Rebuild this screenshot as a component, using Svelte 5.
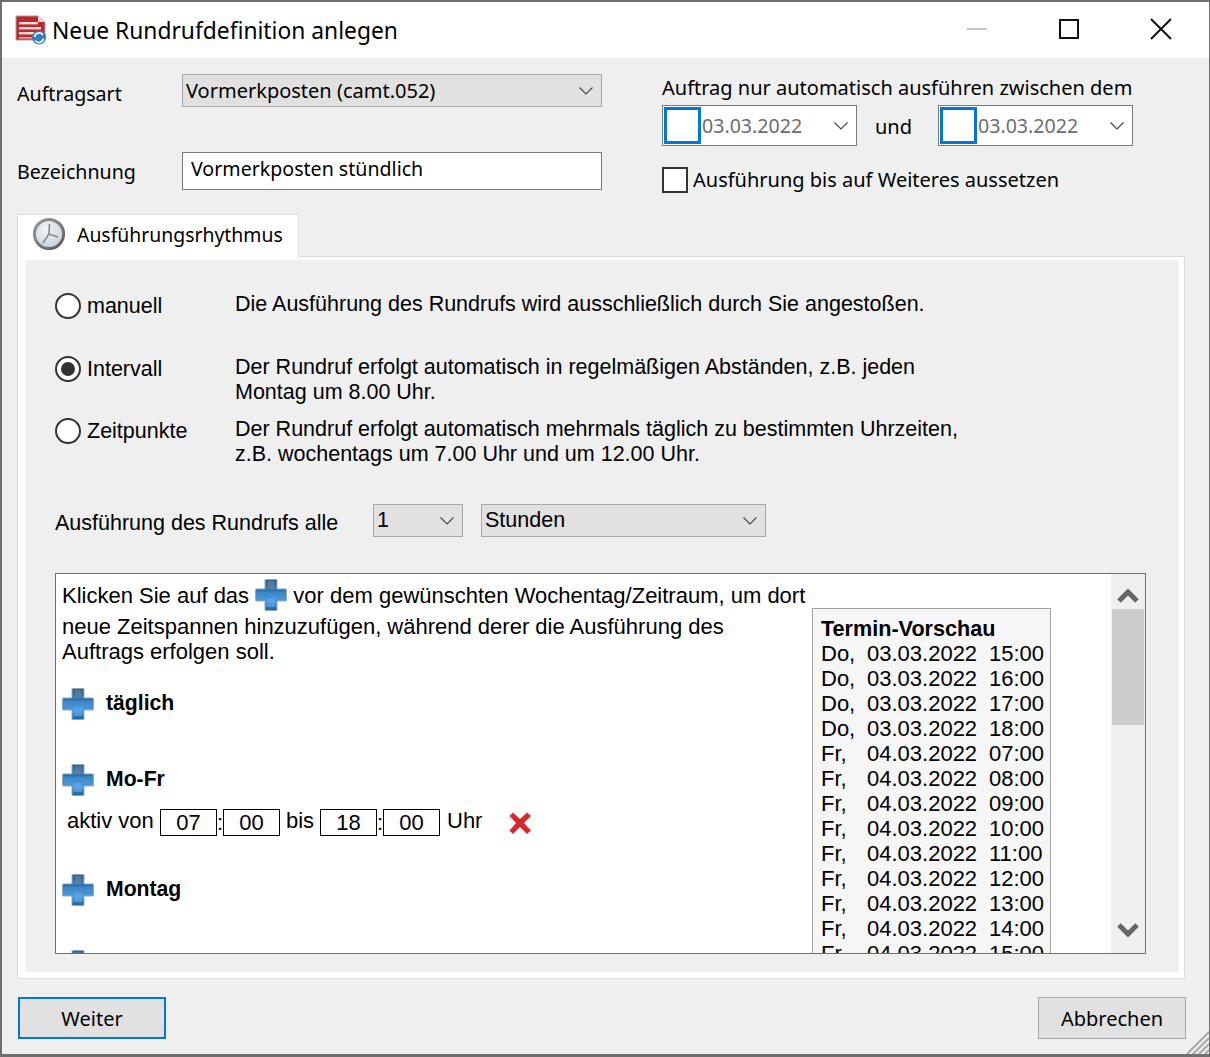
<script>
	const preview = [
		['Do,', '03.03.2022', '15:00'],
		['Do,', '03.03.2022', '16:00'],
		['Do,', '03.03.2022', '17:00'],
		['Do,', '03.03.2022', '18:00'],
		['Fr,', '04.03.2022', '07:00'],
		['Fr,', '04.03.2022', '08:00'],
		['Fr,', '04.03.2022', '09:00'],
		['Fr,', '04.03.2022', '10:00'],
		['Fr,', '04.03.2022', '11:00'],
		['Fr,', '04.03.2022', '12:00'],
		['Fr,', '04.03.2022', '13:00'],
		['Fr,', '04.03.2022', '14:00'],
		['Fr,', '04.03.2022', '15:00']
	];

	const rhythms = [
		{ label: 'manuell', lines: ['Die Ausführung des Rundrufs wird ausschließlich durch Sie angestoßen.'], height: 63 },
		{ label: 'Intervall', checked: true, lines: ['Der Rundruf erfolgt automatisch in regelmäßigen Abständen, z.B. jeden', 'Montag um 8.00 Uhr.'], height: 62 },
		{ label: 'Zeitpunkte', lines: ['Der Rundruf erfolgt automatisch mehrmals täglich zu bestimmten Uhrzeiten,', 'z.B. wochentags um 7.00 Uhr und um 12.00 Uhr.'], height: 87 }
	];
</script>

{#snippet chevron()}
	<svg class="chevron" width="14" height="8" viewBox="0 0 14 8"><path d="M0.5 0.5 L7 7 L13.5 0.5" fill="none" stroke="#444" stroke-width="1.1" /></svg>
{/snippet}

{#snippet plus()}
	<svg class="plus" width="32" height="32" viewBox="0 0 32 32">
		<defs>
			<linearGradient id="plusfill" x1="0" y1="0" x2="0" y2="1">
				<stop offset="0" stop-color="#2f5f8c" />
				<stop offset="0.35" stop-color="#3b82bf" />
				<stop offset="0.7" stop-color="#4a9ae0" />
				<stop offset="1" stop-color="#1d5f99" />
			</linearGradient>
		</defs>
		<path d="M10 1 Q10 0.5 11 0.5 H21 Q22 0.5 22 1 V10 H31 Q31.5 10 31.5 11 V21 Q31.5 22 31 22 H22 V31 Q22 31.5 21 31.5 H11 Q10 31.5 10 31 V22 H1 Q0.5 22 0.5 21 V11 Q0.5 10 1 10 H10 Z" fill="url(#plusfill)" stroke="#8fa9c0" stroke-width="1" />
		<rect x="13" y="2" width="6" height="8" fill="#6f8498" opacity="0.6" />
		<rect x="2" y="10.5" width="28" height="2" fill="#2a6da8" opacity="0.8" />
		<rect x="12" y="19" width="8" height="9" fill="#5caee8" opacity="0.6" />
	</svg>
{/snippet}

{#snippet datebox()}
	<div class="date">
		<span class="date-check"></span>
		<span class="date-text">03.03.2022</span>
		{@render chevron()}
	</div>
{/snippet}

<div class="window">
	<header class="titlebar">
		<svg class="app-icon" width="32" height="30" viewBox="0 0 32 30">
			<path d="M1 1 H23 L30 7 V25 H1 Z" fill="#c0272d" stroke="#a0a0a0" stroke-width="1" />
			<path d="M23 1 V7 H30 Z" fill="#f0d8d8" />
			<rect x="4" y="7" width="19" height="2.4" fill="#f7dcdc" />
			<rect x="4" y="12" width="22" height="2.4" fill="#f7dcdc" />
			<rect x="4" y="17" width="15" height="2.4" fill="#f7dcdc" />
			<rect x="4" y="22" width="13" height="1.6" fill="#e9a9a9" />
			<circle cx="24" cy="22.5" r="7" fill="#2f7ec0" />
			<path d="M19.5 22 a4.7 4.7 0 0 1 8.5 -2 M28.5 23.5 a4.7 4.7 0 0 1 -8.5 2" fill="none" stroke="#e6f0fa" stroke-width="1.7" />
		</svg>
		<span class="title">Neue Rundrufdefinition anlegen</span>
		<div class="winbtns">
			<span class="win-min"></span>
			<span class="win-max"></span>
			<svg class="win-close" width="22" height="22" viewBox="0 0 22 22"><path d="M1 1 L21 21 M21 1 L1 21" stroke="#111" stroke-width="2" fill="none" /></svg>
		</div>
	</header>

	<section class="head">
		<div class="head-left">
			<div class="field first">
				<span class="field-label low">Auftragsart</span>
				<div class="select wide">Vormerkposten (camt.052){@render chevron()}</div>
			</div>
			<div class="field second">
				<span class="field-label">Bezeichnung</span>
				<div class="textbox">Vormerkposten stündlich</div>
			</div>
		</div>
		<div class="head-right">
			<div class="range-title">Auftrag nur automatisch ausführen zwischen dem</div>
			<div class="dates">
				{@render datebox()}
				<span class="und">und</span>
				{@render datebox()}
			</div>
			<label class="suspend">
				<span class="checkbox"></span>
				<span>Ausführung bis auf Weiteres aussetzen</span>
			</label>
		</div>
	</section>

	<div class="tab">
		<svg class="clock" width="34" height="34" viewBox="0 0 34 34">
			<defs>
				<radialGradient id="clockface" cx="0.4" cy="0.35" r="0.8">
					<stop offset="0" stop-color="#f2f5f8" />
					<stop offset="1" stop-color="#bccad8" />
				</radialGradient>
				<linearGradient id="clockring" x1="0" y1="0" x2="1" y2="1">
					<stop offset="0" stop-color="#9a9a9a" />
					<stop offset="1" stop-color="#5c5c5c" />
				</linearGradient>
			</defs>
			<circle cx="17" cy="17" r="14.6" fill="url(#clockface)" stroke="url(#clockring)" stroke-width="3" />
			<path d="M17 17 L17.5 7 M17 17 L26 20 M17 17 L11 26" stroke="#8a8a8a" stroke-width="1.6" fill="none" />
		</svg>
		<span>Ausführungsrhythmus</span>
	</div>

	<section class="panel">
		<div class="panel-inner">
			{#each rhythms as r}
				<div class="rhythm" style="height: {r.height}px">
					<div class="radio-wrap">
						<span class="radio" class:checked={r.checked}></span>
						<span class="radio-label">{r.label}</span>
					</div>
					<div class="desc">
						{#each r.lines as line}<div>{line}</div>{/each}
					</div>
				</div>
			{/each}

			<div class="every">
				<span class="every-label">Ausführung des Rundrufs alle</span>
				<div class="select num">1{@render chevron()}</div>
				<div class="select unit">Stunden{@render chevron()}</div>
			</div>

			<div class="schedule">
				<div class="schedule-main">
					<div class="intro">
						<div class="intro-first">Klicken Sie auf das {@render plus()} vor dem gewünschten Wochentag/Zeitraum, um dort</div>
						<div class="intro-line">neue Zeitspannen hinzuzufügen, während derer die Ausführung des</div>
						<div class="intro-line">Auftrags erfolgen soll.</div>
					</div>

					<div class="day">
						<div class="day-head">{@render plus()}<b>täglich</b></div>
					</div>
					<div class="day">
						<div class="day-head">{@render plus()}<b>Mo-Fr</b></div>
						<div class="span-row">
							<span class="aktiv">aktiv von</span>
							<span class="time">07</span><span class="colon">:</span><span class="time">00</span>
							<span class="bis">bis</span>
							<span class="time">18</span><span class="colon">:</span><span class="time">00</span>
							<span class="uhr">Uhr</span>
							<svg class="remove" width="24" height="24" viewBox="0 0 24 24">
								<path d="M1.5 5 L5 1.5 L12 8 L19 1.5 L23 5 L16 12 L23 19.5 L19 23 L12 16 L5 23 L1.5 19.5 L8 12 Z" fill="#d02a2a" stroke="#d99" stroke-width="0.8" />
							</svg>
						</div>
					</div>
					<div class="day">
						<div class="day-head">{@render plus()}<b>Montag</b></div>
					</div>
					<div class="day">
						<div class="day-head">{@render plus()}</div>
					</div>
				</div>

				<div class="preview">
					<div class="preview-title">Termin-Vorschau</div>
					{#each preview as row}
						<div class="preview-row">
							<span>{row[0]}</span><span>{row[1]}</span><span>{row[2]}</span>
						</div>
					{/each}
				</div>

				<div class="scrollbar">
					<svg class="arrow" width="22" height="16" viewBox="0 0 22 16"><path d="M2 14 L11 5 L20 14" fill="none" stroke="#666" stroke-width="5" /></svg>
					<div class="thumb"></div>
					<svg class="arrow down" width="22" height="16" viewBox="0 0 22 16"><path d="M2 2 L11 11 L20 2" fill="none" stroke="#666" stroke-width="5" /></svg>
				</div>
			</div>
		</div>
	</section>

	<footer class="actions">
		<button class="btn primary">Weiter</button>
		<button class="btn">Abbrechen</button>
	</footer>

	<svg class="grip" width="24" height="24" viewBox="0 0 24 24">
		<path d="M24 2 L2 24 M24 8 L8 24 M24 14 L14 24 M24 20 L20 24" stroke="#a8a8a8" stroke-width="2" fill="none" />
	</svg>
</div>

<style>
	:global(body) {
		margin: 0;
		background: #efefef;
	}

	.window {
		position: relative;
		box-sizing: border-box;
		width: 1210px;
		height: 1057px;
		border: 2px solid #6f6f6f;
		border-right-width: 1px;
		border-bottom-width: 3px;
		background: #efefef;
		overflow: hidden;
		font-family: 'Noto Sans', 'Open Sans', sans-serif;
		font-size: 20px;
		color: #000;
	}

	.titlebar {
		display: flex;
		align-items: center;
		height: 56px;
		padding-left: 13px;
		background: #fff;
	}

	.app-icon {
		margin-right: 5px;
	}

	.title {
		font-size: 22.8px;
	}

	.winbtns {
		position: relative;
		margin-left: auto;
		display: flex;
		align-items: center;
		box-sizing: border-box;
		height: 100%;
		padding-bottom: 2px;
	}

	.win-min {
		width: 20px;
		height: 2px;
		background: #c8c8c8;
		margin-right: 72px;
	}

	.win-max {
		box-sizing: border-box;
		width: 20px;
		height: 20px;
		border: 2px solid #111;
		margin-right: 71px;
	}

	.win-close {
		margin-right: 37px;
	}

	.head {
		display: flex;
		height: 155px;
		padding-left: 15px;
	}

	.head-left {
		width: 645px;
	}

	.field {
		display: flex;
		align-items: center;
	}

	.field.first {
		margin-top: 16px;
		height: 33px;
	}

	.field.second {
		margin-top: 45px;
		height: 38px;
	}

	.field-label {
		width: 165px;
		font-size: 19.6px;
	}

	.field-label.low {
		padding-top: 6px;
	}

	.select {
		position: relative;
		box-sizing: border-box;
		display: flex;
		align-items: center;
		justify-content: space-between;
		height: 33px;
		padding: 0 8px 0 3px;
		border: 1px solid #a8a8a8;
		background: #e1e1e1;
	}

	.select.wide {
		width: 420px;
	}

	.textbox {
		box-sizing: border-box;
		width: 420px;
		height: 38px;
		padding: 0 8px;
		line-height: 32px;
		border: 1px solid #7a7a7a;
		background: #fff;
		font-size: 19.6px;
	}

	.range-title {
		margin-top: 15px;
		height: 32px;
		line-height: 30px;
	}

	.dates {
		display: flex;
		align-items: center;
		height: 41px;
	}

	.date {
		box-sizing: border-box;
		display: flex;
		align-items: center;
		width: 195px;
		height: 41px;
		padding: 1px 8px 1px 1px;
		border: 1px solid #7a7a7a;
		background: #fff;
		color: #6d6d6d;
		font-size: 19.6px;
	}

	.date-check {
		box-sizing: border-box;
		width: 37px;
		height: 37px;
		border: 3px solid #0078d7;
		margin-right: 1px;
	}

	.date-text {
		flex: 1;
	}

	.und {
		box-sizing: border-box;
		width: 81px;
		padding: 2px 0 0 18px;
	}

	.suspend {
		display: flex;
		align-items: center;
		gap: 5px;
		margin-top: 20px;
	}

	.checkbox {
		box-sizing: border-box;
		width: 26px;
		height: 26px;
		border: 2px solid #333;
		background: #fff;
	}

	.tab {
		position: relative;
		z-index: 1;
		box-sizing: border-box;
		display: flex;
		align-items: center;
		gap: 11px;
		width: 282px;
		height: 43px;
		margin: 1px 0 0 15px;
		padding: 0 0 4px 14px;
		border: 1px solid #dcdcdc;
		border-bottom: 0;
		background: #fff;
		font-size: 19.4px;
	}

	.clock {
		margin-top: -1px;
	}

	.panel {
		box-sizing: border-box;
		width: 1168px;
		height: 723px;
		margin-left: 15px;
		margin-top: -1px;
		padding: 3px 5px 6px 7px;
		border: 1px solid #dcdcdc;
		background: #fff;
	}

	.panel-inner {
		box-sizing: border-box;
		height: 712px;
		padding: 32px 33px 0 30px;
		background: #efefef;
		font-family: 'Liberation Sans', Arial, sans-serif;
		font-size: 21.5px;
	}

	.rhythm {
		display: flex;
		line-height: 25px;
	}

	.radio-wrap {
		display: flex;
		align-items: center;
		gap: 6px;
		width: 180px;
		height: 26px;
		margin-top: 1px;
	}

	.radio {
		box-sizing: border-box;
		display: flex;
		align-items: center;
		justify-content: center;
		width: 26px;
		height: 26px;
		border: 2px solid #333;
		border-radius: 50%;
		background: #fff;
	}

	.radio.checked::after {
		content: '';
		width: 14px;
		height: 14px;
		border-radius: 50%;
		background: #333;
	}

	.every {
		display: flex;
		align-items: center;
		height: 33px;
	}

	.every-label {
		width: 318px;
		padding-top: 5px;
	}

	.select.num {
		width: 90px;
		margin-right: 18px;
	}

	.select.unit {
		width: 285px;
	}

	.schedule {
		box-sizing: border-box;
		position: relative;
		display: flex;
		width: 1091px;
		height: 381px;
		margin-top: 36px;
		border: 1px solid #6f6f6f;
		background: #fff;
		overflow: hidden;
		font-size: 22px;
	}

	.schedule-main {
		box-sizing: border-box;
		width: 756px;
		padding-left: 6px;
		flex-shrink: 0;
	}

	.intro {
		line-height: 25px;
		margin-bottom: 24px;
	}

	.intro-first {
		height: 40px;
		white-space: nowrap;
		line-height: 44px;
	}

	.intro-first :global(.plus) {
		vertical-align: middle;
		margin-top: -4px;
	}

	.day {
		padding-bottom: 44px;
	}

	.day-head {
		display: flex;
		align-items: center;
		gap: 12px;
		height: 32px;
	}

	.day-head b {
		font-size: 21.2px;
		margin-bottom: 3px;
	}

	.span-row {
		display: flex;
		align-items: center;
		height: 29px;
		margin: 12px 0 -7px 5px;
	}

	.aktiv {
		width: 93px;
		padding-bottom: 3px;
	}

	.time {
		box-sizing: border-box;
		width: 57px;
		height: 27px;
		line-height: 25px;
		text-align: center;
		border: 1px solid #000;
	}

	.colon {
		width: 6px;
		text-align: center;
	}

	.bis {
		width: 40px;
		text-align: center;
		padding-bottom: 3px;
	}

	.uhr {
		width: 61px;
		margin-left: 7px;
		padding-bottom: 3px;
	}

	.preview {
		box-sizing: border-box;
		width: 239px;
		height: 400px;
		flex-shrink: 0;
		margin-top: 34px;
		padding: 7px 8px;
		border: 1px solid #a0a0a0;
		background: #f6f6f6;
		line-height: 25px;
	}

	.preview-title {
		font-weight: bold;
		font-size: 21.6px;
	}

	.preview-row {
		display: grid;
		grid-template-columns: 46px 122px auto;
		white-space: nowrap;
	}

	.scrollbar {
		position: absolute;
		top: 0;
		right: 0;
		bottom: 0;
		width: 34px;
		display: flex;
		flex-direction: column;
		align-items: center;
		background: #efefef;
	}

	.arrow {
		margin-top: 13px;
		flex-shrink: 0;
	}

	.arrow.down {
		margin-top: auto;
		margin-bottom: 14px;
	}

	.thumb {
		width: 32px;
		height: 116px;
		margin-top: 6px;
		background: #cdcdcd;
	}

	.actions {
		display: flex;
		justify-content: space-between;
		padding: 18px 23px 0 16px;
	}

	.btn {
		box-sizing: border-box;
		width: 148px;
		height: 42px;
		padding: 0;
		border: 1px solid #a8a8a8;
		background: #e1e1e1;
		font-family: 'Noto Sans', 'Open Sans', sans-serif;
		font-size: 20px;
		color: #000;
	}

	.btn.primary {
		border: 2px solid #0078d7;
	}

	.grip {
		position: absolute;
		right: 0;
		bottom: 0;
	}
</style>
